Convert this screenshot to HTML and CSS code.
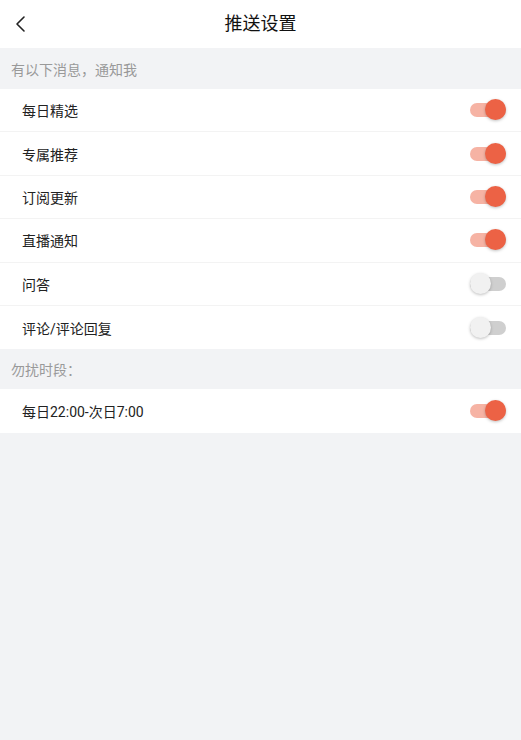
FILE: index.html
```html
<!DOCTYPE html>
<html lang="zh-CN">
<head>
    <meta charset="UTF-8">
    <meta name="viewport" content="width=device-width, initial-scale=1.0">
    <title>推送设置</title>
    <link rel="stylesheet" href="styles.css">
</head>
<body>
    <header class="topbar">
        <span class="back">
            <svg width="12" height="18" viewBox="0 0 12 18"><path d="M9 2 L2 9 L9 16" fill="none" stroke="#222" stroke-width="1.6" stroke-linecap="round" stroke-linejoin="round"/></svg>
        </span>
        <h1>推送设置</h1>
    </header>

    <div class="section-title first">有以下消息，通知我</div>
    <ul class="list">
        <li><span>每日精选</span><span class="switch on"></span></li>
        <li><span>专属推荐</span><span class="switch on"></span></li>
        <li><span>订阅更新</span><span class="switch on"></span></li>
        <li><span>直播通知</span><span class="switch on"></span></li>
        <li><span>问答</span><span class="switch"></span></li>
        <li><span>评论/评论回复</span><span class="switch"></span></li>
    </ul>

    <div class="section-title">勿扰时段：</div>
    <ul class="list">
        <li><span>每日22:00-次日7:00</span><span class="switch on"></span></li>
    </ul>
</body>
</html>
```

FILE: styles.css
```css
* {
    margin: 0;
    padding: 0;
    box-sizing: border-box;
}

body {
    font-family: Roboto, "Noto Sans CJK SC", sans-serif;
    background-color: #f2f3f5;
    color: #222;
    width: 521px;
    min-height: 740px;
}

.topbar {
    height: 48px;
    background-color: #fff;
    display: flex;
    align-items: center;
    justify-content: center;
    position: relative;
}

.topbar h1 {
    font-size: 18px;
    font-weight: normal;
    color: #111;
    line-height: 1;
}

.back {
    position: absolute;
    left: 15px;
    top: 15px;
    display: flex;
}

.section-title {
    height: 40px;
    padding-left: 11px;
    display: flex;
    align-items: center;
    font-size: 14px;
    color: #999;
}

.section-title.first {
    height: 41px;
}

.list {
    list-style: none;
    background-color: #fff;
}

.list li {
    height: 43.4px;
    padding: 0 15px 0 22px;
    display: flex;
    align-items: center;
    justify-content: space-between;
    font-size: 14px;
    border-bottom: 1px solid #f3f3f3;
}

.list li:last-child {
    border-bottom: none;
}

.switch {
    width: 36px;
    height: 14px;
    border-radius: 7px;
    background-color: #cfcfcf;
    position: relative;
}

.switch::after {
    content: "";
    position: absolute;
    top: -4px;
    left: 0;
    width: 21px;
    height: 21px;
    border-radius: 50%;
    background-color: #f1f1f1;
    box-shadow: 0 1px 3px rgba(0, 0, 0, 0.25);
}

.switch.on {
    background-color: #f6b3a4;
}

.switch.on::after {
    left: auto;
    right: 0;
    background-color: #ec6245;
}
```
